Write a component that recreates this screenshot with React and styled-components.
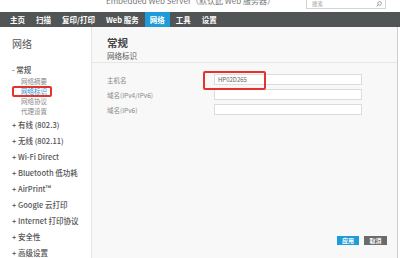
import React from "react";
import styled, { createGlobalStyle } from "styled-components";

const Global = createGlobalStyle`
  html, body { margin: 0; padding: 0; background: #fff; }
  body { font-family: "Noto Sans CJK SC", "Liberation Sans", sans-serif; }
  #root { width: 400px; height: 258px; overflow: hidden; }
  * { box-sizing: border-box; }
`;

const Page = styled.div`
  width: 400px;
  height: 258px;
  display: flex;
  flex-direction: column;
  overflow: hidden;
  position: relative;
`;

const TopStrip = styled.div`
  height: 12px;
  position: relative;
  background: #fff;
  overflow: hidden;
`;

const Title = styled.div`
  position: absolute;
  left: 106px;
  top: -4px;
  font-size: 8px;
  line-height: 10px;
  color: #777;
  white-space: nowrap;
`;

const Search = styled.div`
  position: absolute;
  left: 306px;
  top: -3px;
  width: 80px;
  height: 12px;
  border: 1px solid #d4d4d4;
  background: #fff;
  display: flex;
  align-items: center;
  justify-content: space-between;
  padding: 2px 3px 0 5px;
  font-size: 5.5px;
  line-height: 7px;
  color: #999;
`;

const Nav = styled.div`
  height: 15px;
  background: #515555;
  display: flex;
  align-items: stretch;
  padding-left: 5px;
  gap: 1px;
`;

const NavItem = styled.div`
  padding: 0 5px;
  display: flex;
  align-items: center;
  font-size: 7.5px;
  font-weight: 700;
  color: #fff;
  white-space: nowrap;
  background: ${(p) => (p.$active ? "#1e9bd8" : "transparent")};
`;

const Main = styled.div`
  flex: 1;
  display: flex;
  min-height: 0;
`;

const Sidebar = styled.div`
  width: 92px;
  border-right: 1px solid #e4e4e4;
  background: #fff;
  padding: 10px 0 0 12px;
  display: flex;
  flex-direction: column;
  position: relative;
`;

const SideHeading = styled.div`
  font-size: 10px;
  line-height: 14px;
  color: #555;
  margin-bottom: 11px;
`;

const SideItem = styled.div`
  font-size: 7.5px;
  line-height: 16px;
  color: #555;
  white-space: nowrap;
  font-weight: 500;
`;

const SubList = styled.div`
  display: flex;
  flex-direction: column;
  padding-left: 9px;
  margin: -2px 0 1px;
`;

const SubItem = styled.div`
  font-size: 6.5px;
  line-height: 10px;
  color: ${(p) => (p.$active ? "#1e8fd0" : "#888")};
  white-space: nowrap;
`;

const Mark = styled.div`
  position: absolute;
  z-index: 2;
  border: 2px solid #e5332a;
  border-radius: 2px;
  pointer-events: none;
`;

const Content = styled.div`
  flex: 1;
  background: #f8f8f8;
  border-right: 1px solid #cfcfcf;
  margin-right: 2px;
  display: flex;
  flex-direction: column;
  position: relative;
`;

const Header = styled.div`
  padding: 9px 0 0 15px;
  height: 36px;
  border-bottom: 1px solid #e6e6e6;
`;

const H1 = styled.div`
  font-size: 10.5px;
  line-height: 14px;
  color: #444;
  font-weight: 700;
`;

const H2 = styled.div`
  font-size: 7.5px;
  line-height: 11px;
  color: #555;
`;

const Form = styled.div`
  padding: 11px 0 0 15px;
  display: flex;
  flex-direction: column;
  gap: 4px;
`;

const Row = styled.div`
  display: flex;
  align-items: center;
  height: 11px;
`;

const Label = styled.div`
  width: 107px;
  font-size: 6.5px;
  color: #888;
  white-space: nowrap;
`;

const Input = styled.div`
  width: 148px;
  height: 11px;
  background: #fff;
  border: 1px solid #dcdcdc;
  font-size: 6px;
  line-height: 9px;
  color: #666;
  padding-left: 3px;
`;

const Buttons = styled.div`
  margin-top: auto;
  display: flex;
  justify-content: flex-end;
  gap: 5px;
  padding: 0 10px 13px 0;
`;

const Btn = styled.div`
  width: ${(p) => p.$w}px;
  height: 9px;
  background: ${(p) => p.$bg};
  color: #fff;
  font-size: 6px;
  line-height: 9px;
  text-align: center;
  font-weight: 700;
`;

const navItems = ["主页", "扫描", "复印/打印", "Web 服务", "网络", "工具", "设置"];
const sideItems = [
  "+ 无线 (802.11)",
  "+ Wi-Fi Direct",
  "+ Bluetooth 低功耗",
  "+ AirPrint™",
  "+ Google 云打印",
  "+ Internet 打印协议",
  "+ 安全性",
  "+ 高级设置",
];

export default function App() {
  return (
    <Page>
      <Global />
      <TopStrip>
        <Title>Embedded Web Server（默认此 Web 服务器）</Title>
        <Search>
          <span>搜索</span>
          <svg width="6" height="6" viewBox="0 0 10 10">
            <circle cx="6" cy="4" r="3" fill="none" stroke="#888" strokeWidth="1.3" />
            <line x1="4" y1="6" x2="1" y2="9" stroke="#888" strokeWidth="1.5" />
          </svg>
        </Search>
      </TopStrip>
      <Nav>
        {navItems.map((n) => (
          <NavItem key={n} $active={n === "网络"}>{n}</NavItem>
        ))}
      </Nav>
      <Main>
        <Sidebar>
          <SideHeading>网络</SideHeading>
          <SideItem>- 常规</SideItem>
          <SubList>
            <SubItem>网络摘要</SubItem>
            <SubItem $active>网络标识</SubItem>
            <SubItem>网络协议</SubItem>
            <SubItem>代理设置</SubItem>
          </SubList>
          <SideItem>+ 有线 (802.3)</SideItem>
          {sideItems.map((s) => (
            <SideItem key={s}>{s}</SideItem>
          ))}
          <Mark style={{ left: 12, top: 59, width: 40, height: 11 }} />
        </Sidebar>
        <Content>
          <Header>
            <H1>常规</H1>
            <H2>网络标识</H2>
          </Header>
          <Form>
            <Row>
              <Label>主机名</Label>
              <Input>HP02D265</Input>
            </Row>
            <Row>
              <Label>域名(IPv4/IPv6)</Label>
              <Input />
            </Row>
            <Row>
              <Label>域名(IPv6)</Label>
              <Input />
            </Row>
          </Form>
          <Mark style={{ left: 111, top: 44, width: 63, height: 19 }} />
          <Buttons>
            <Btn $w={22} $bg="#1e9bd8">应用</Btn>
            <Btn $w={23} $bg="#6b6b6b">取消</Btn>
          </Buttons>
        </Content>
      </Main>
    </Page>
  );
}
